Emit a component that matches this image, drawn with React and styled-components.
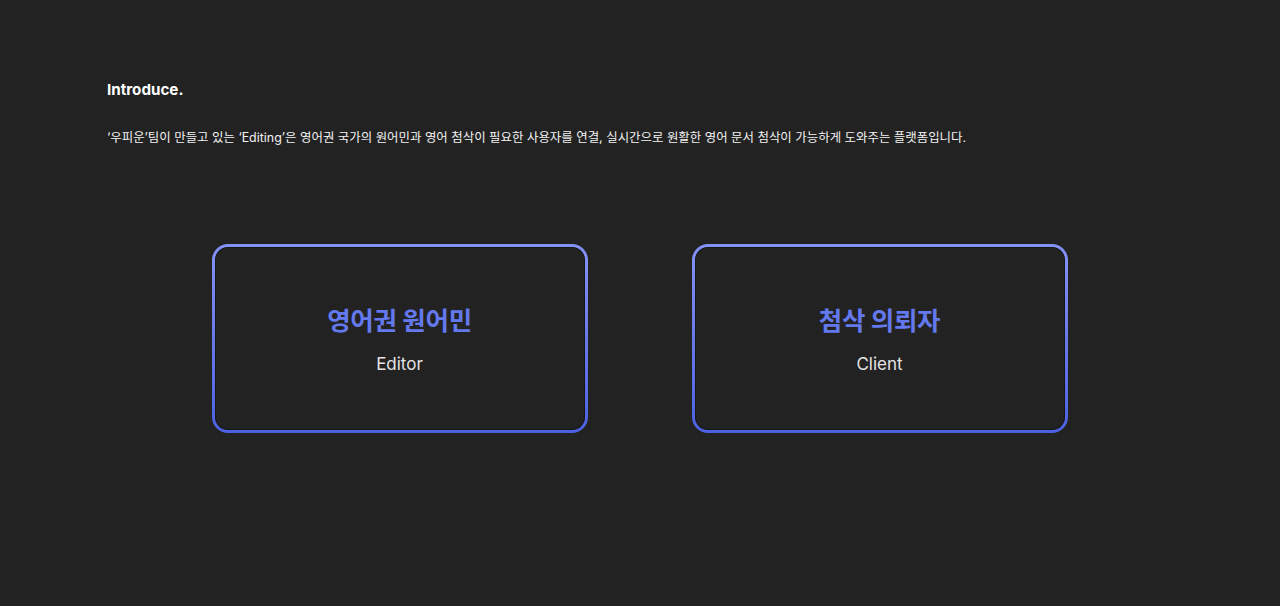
import React from "react";
import styled, { createGlobalStyle } from "styled-components";

const GlobalStyle = createGlobalStyle`
    html, body {
        margin: 0;
        padding: 0;
        background-color: #222222;
    }
    body {
        font-family: Inter, "Noto Sans CJK KR", sans-serif;
        color: #ffffff;
    }
`;

const Wrap = styled.div`
    min-height: 606px;
    box-sizing: border-box;
    padding: 80px 108px 0 107px;
    background-color: #222222;
`;

const Intro = styled.section`
    h3 {
        margin: 0;
        font-size: 15.2px;
        font-weight: 700;
        line-height: 20px;
        color: #ffffff;
    }
    p {
        margin: 28px 0 0;
        font-size: 12.45px;
        line-height: 20px;
        color: #f2f2f2;
    }
`;

const CardRow = styled.div`
    display: flex;
    justify-content: center;
    gap: 104px;
    margin-top: 96px;
`;

const Card = styled.div`
    width: 376px;
    height: 189px;
    box-sizing: border-box;
    border: 3px solid transparent;
    border-radius: 16px;
    background:
        linear-gradient(#222222, #222222) padding-box,
        linear-gradient(180deg, #8593f6 0%, #4b61e0 100%) border-box;
    box-shadow: inset 0 0 0 1px rgba(0, 0, 0, 0.35);
    display: flex;
    flex-direction: column;
    align-items: center;
    justify-content: center;
    gap: 15px;
    padding-top: 2px;
    cursor: pointer;

    h2 {
        margin: 0;
        font-size: 25.5px;
        font-weight: 700;
        line-height: 34px;
        color: #6479ee;
        letter-spacing: -0.3px;
    }
    span {
        font-size: 17px;
        line-height: 22px;
        color: #e4e4e4;
    }
`;

const roles = [
    { title: "영어권 원어민", sub: "Editor" },
    { title: "첨삭 의뢰자", sub: "Client" },
];

const App = () => {
    return (
        <Wrap>
            <GlobalStyle />
            <Intro>
                <h3>Introduce.</h3>
                <p>
                    ‘우피운’팀이 만들고 있는 ‘Editing’은 영어권 국가의 원어민과 영어 첨삭이 필요한 사용자를 연결, 실시간으로 원활한 영어 문서 첨삭이 가능하게 도와주는 플랫폼입니다.
                </p>
            </Intro>
            <CardRow>
                {roles.map((e) => (
                    <Card key={e.sub}>
                        <h2>{e.title}</h2>
                        <span>{e.sub}</span>
                    </Card>
                ))}
            </CardRow>
        </Wrap>
    );
};

export default App;
